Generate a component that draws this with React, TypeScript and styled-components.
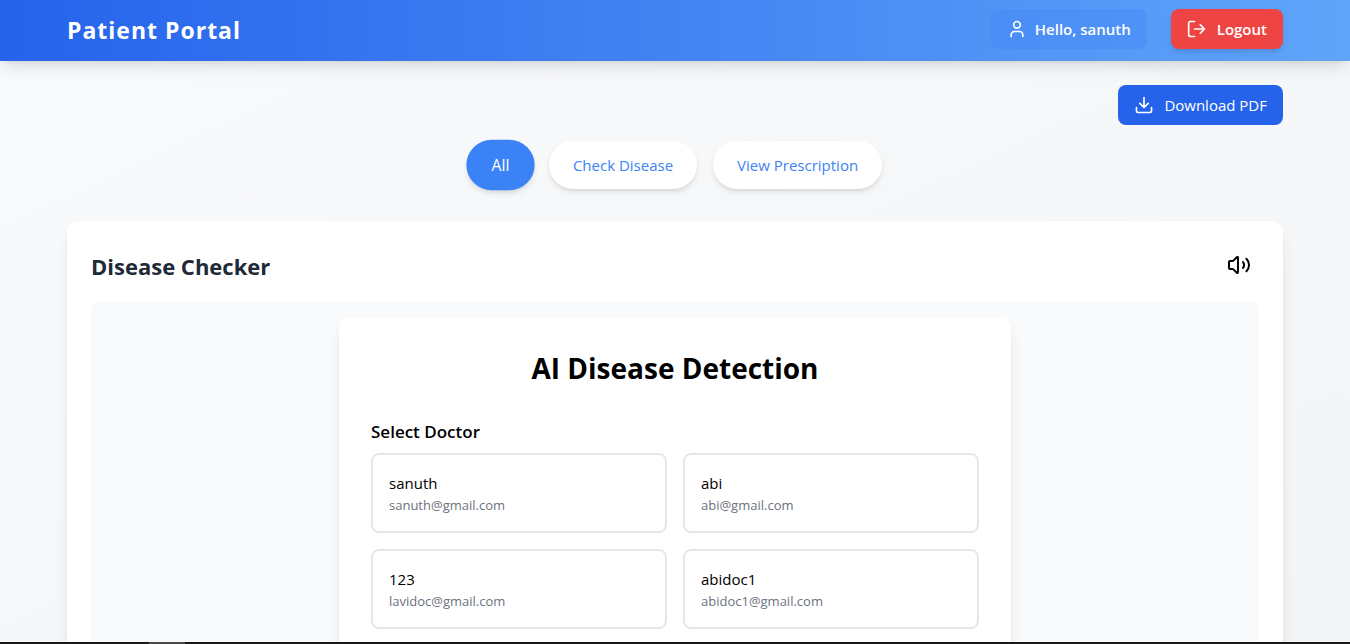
import React from 'react';
import styled, { createGlobalStyle, css } from 'styled-components';

const GlobalStyle = createGlobalStyle`
  *, *::before, *::after { box-sizing: border-box; }
  html, body { height: 100%; }
  body {
    margin: 0;
    overflow: hidden;
    color: #000;
    font-family: 'Segoe UI', 'Open Sans', 'Noto Sans', sans-serif;
    font-size: 15px;
    line-height: 24px;
  }
  #root { height: 100%; }
  h1, h2, h3, p { margin: 0; }
  button { font: inherit; border: 0; cursor: pointer; }
`;

const Window = styled.div`
  height: 100%;
  display: flex;
  flex-direction: column;
`;

const Page = styled.div`
  flex: 1;
  min-height: 0;
  overflow: hidden;
  background: linear-gradient(to bottom right, #f9fafb, #f3f4f6);
`;

const Taskbar = styled.div`
  flex: none;
  height: 2px;
  padding-left: 149px;
  background: #1a1718;
`;

const ActiveTask = styled.div`
  width: 36px;
  height: 2px;
  background: #4d4b4c;
`;

const Container = styled.div`
  max-width: 1280px;
  margin: 0 auto;
  padding: 0 32px;
`;

const Header = styled.header`
  background: linear-gradient(to right, #2563eb, #60a5fa);
  box-shadow: 0 10px 15px -3px rgba(0, 0, 0, 0.1), 0 4px 6px -4px rgba(0, 0, 0, 0.1);
  color: #fff;
`;

const HeaderInner = styled(Container)`
  display: flex;
  align-items: flex-end;
  justify-content: space-between;
  padding-top: 9px;
  padding-bottom: 12px;
`;

const Brand = styled.h1`
  font-size: 23px;
  line-height: 38px;
  font-weight: 700;
  letter-spacing: 1px;
`;

const HeaderActions = styled.div`
  display: flex;
  align-items: center;
  gap: 24px;
`;

const pill = css`
  display: flex;
  align-items: center;
  gap: 8px;
  height: 40px;
  padding: 0 16px;
  border-radius: 8px;
  white-space: nowrap;
`;

const Greeting = styled.div`
  ${pill}
  background: rgba(59, 130, 246, 0.3);
  font-weight: 600;
`;

const ActionButton = styled.button<{ $tone: 'danger' | 'primary' }>`
  ${pill}
  gap: 10px;
  color: #fff;
  background: ${({ $tone }) => ($tone === 'danger' ? '#ef4444' : '#2563eb')};
  font-weight: ${({ $tone }) => ($tone === 'danger' ? 600 : 400)};
  box-shadow: ${({ $tone }) =>
    $tone === 'danger'
      ? '0 4px 6px -1px rgba(0, 0, 0, 0.1), 0 2px 4px -2px rgba(0, 0, 0, 0.1)'
      : 'none'};
`;

const Main = styled(Container).attrs({ as: 'main' })`
  padding-top: 24px;
  padding-bottom: 24px;
`;

const Toolbar = styled.div`
  display: flex;
  justify-content: flex-end;
  margin-bottom: 16px;
`;

const Tabs = styled.nav`
  display: flex;
  justify-content: center;
  gap: 16px;
  margin-bottom: 32px;
`;

const Tab = styled.button<{ $active?: boolean }>`
  height: 48px;
  padding: 0 24px;
  border-radius: 24px;
  background: ${({ $active }) => ($active ? '#3b82f6' : '#fff')};
  color: ${({ $active }) => ($active ? '#fff' : '#3b82f6')};
  box-shadow: 0 4px 6px -1px rgba(0, 0, 0, 0.1), 0 2px 4px -2px rgba(0, 0, 0, 0.1);
  transform: ${({ $active }) => ($active ? 'scale(1.05)' : 'none')};
`;

const Panel = styled.section`
  padding: 24px;
  border-radius: 12px;
  background: #fff;
  box-shadow: 0 10px 15px -3px rgba(0, 0, 0, 0.1), 0 4px 6px -4px rgba(0, 0, 0, 0.1);
`;

const PanelHeader = styled.div`
  display: flex;
  align-items: flex-end;
  justify-content: space-between;
  margin-bottom: 16px;
`;

const PanelTitle = styled.h2`
  color: #1f2937;
  font-size: 22px;
  line-height: 38px;
  font-weight: 700;
`;

const IconButton = styled.button`
  display: flex;
  padding: 8px;
  background: transparent;
  color: #000;
`;

const PanelBody = styled.div`
  padding: 16px;
  border-radius: 8px;
  background: #f9fafb;
`;

const Card = styled.div`
  max-width: 672px;
  margin: 0 auto;
  padding: 32px;
  border-radius: 12px;
  background: #fff;
  box-shadow: 0 10px 15px -3px rgba(0, 0, 0, 0.1), 0 4px 6px -4px rgba(0, 0, 0, 0.1);
`;

const CardTitle = styled.h2`
  margin-bottom: 32px;
  font-size: 28px;
  line-height: 38px;
  font-weight: 700;
  text-align: center;
`;

const FieldTitle = styled.h3`
  margin-bottom: 8px;
  font-size: 17px;
  line-height: 26px;
  font-weight: 600;
`;

const DoctorGrid = styled.div`
  display: grid;
  grid-template-columns: repeat(2, 1fr);
  gap: 16px;
`;

const DoctorCard = styled.button`
  height: 80px;
  padding: 16px;
  border: 2px solid #e5e7eb;
  border-radius: 8px;
  background: #fff;
  color: #000;
  text-align: left;
`;

const DoctorName = styled.span`
  display: block;
  line-height: 24px;
`;

const DoctorEmail = styled.span`
  display: block;
  color: #6b7280;
  font-size: 13px;
  line-height: 20px;
`;

const Icon = styled.svg.attrs({
  viewBox: '0 0 24 24',
  fill: 'none',
  stroke: 'currentColor',
  strokeWidth: 2,
  strokeLinecap: 'round',
  strokeLinejoin: 'round',
  'aria-hidden': true,
})<{ $size: number }>`
  flex: none;
  width: ${({ $size }) => $size}px;
  height: ${({ $size }) => $size}px;
`;

const UserIcon = () => (
  <Icon $size={20}>
    <path d="M19 21v-2a4 4 0 0 0-4-4H9a4 4 0 0 0-4 4v2" />
    <circle cx="12" cy="7" r="4" />
  </Icon>
);

const LogoutIcon = () => (
  <Icon $size={20}>
    <path d="M9 21H4a2 2 0 0 1-2-2V5a2 2 0 0 1 2-2h5" />
    <path d="M16 17l5-5-5-5M21 12H9" />
  </Icon>
);

const DownloadIcon = () => (
  <Icon $size={20}>
    <path d="M21 15v4a2 2 0 0 1-2 2H5a2 2 0 0 1-2-2v-4" />
    <path d="M7 10l5 5 5-5M12 15V3" />
  </Icon>
);

const VolumeIcon = () => (
  <Icon $size={24}>
    <path d="M11 4.7a.7.7 0 0 0-1.2-.5L6.4 7.6a1.4 1.4 0 0 1-1 .4H3a1 1 0 0 0-1 1v6a1 1 0 0 0 1 1h2.4a1.4 1.4 0 0 1 1 .4l3.4 3.4a.7.7 0 0 0 1.2-.5z" />
    <path d="M16 9a5 5 0 0 1 0 6M19.4 18.4a9 9 0 0 0 0-12.7" />
  </Icon>
);

const tabs = ['All', 'Check Disease', 'View Prescription'];

const doctors = [
  { name: 'sanuth', email: 'sanuth@gmail.com' },
  { name: 'abi', email: 'abi@gmail.com' },
  { name: '123', email: 'lavidoc@gmail.com' },
  { name: 'abidoc1', email: 'abidoc1@gmail.com' },
];

export default function App() {
  const [active, setActive] = React.useState('All');
  return (
    <Window>
      <GlobalStyle />
      <Page>
        <Header>
          <HeaderInner>
            <Brand>Patient Portal</Brand>
            <HeaderActions>
              <Greeting>
                <UserIcon />
                <span>Hello, sanuth</span>
              </Greeting>
              <ActionButton $tone="danger">
                <LogoutIcon />
                <span>Logout</span>
              </ActionButton>
            </HeaderActions>
          </HeaderInner>
        </Header>
        <Main>
          <Toolbar>
            <ActionButton $tone="primary">
              <DownloadIcon />
              <span>Download PDF</span>
            </ActionButton>
          </Toolbar>
          <Tabs>
            {tabs.map((tab) => (
              <Tab key={tab} $active={tab === active} onClick={() => setActive(tab)}>
                {tab}
              </Tab>
            ))}
          </Tabs>
          <Panel>
            <PanelHeader>
              <PanelTitle>Disease Checker</PanelTitle>
              <IconButton aria-label="Read aloud">
                <VolumeIcon />
              </IconButton>
            </PanelHeader>
            <PanelBody>
              <Card>
                <CardTitle>AI Disease Detection</CardTitle>
                <FieldTitle>Select Doctor</FieldTitle>
                <DoctorGrid>
                  {doctors.map((doctor) => (
                    <DoctorCard key={doctor.email}>
                      <DoctorName>{doctor.name}</DoctorName>
                      <DoctorEmail>{doctor.email}</DoctorEmail>
                    </DoctorCard>
                  ))}
                </DoctorGrid>
              </Card>
            </PanelBody>
          </Panel>
        </Main>
      </Page>
      <Taskbar>
        <ActiveTask />
      </Taskbar>
    </Window>
  );
}
